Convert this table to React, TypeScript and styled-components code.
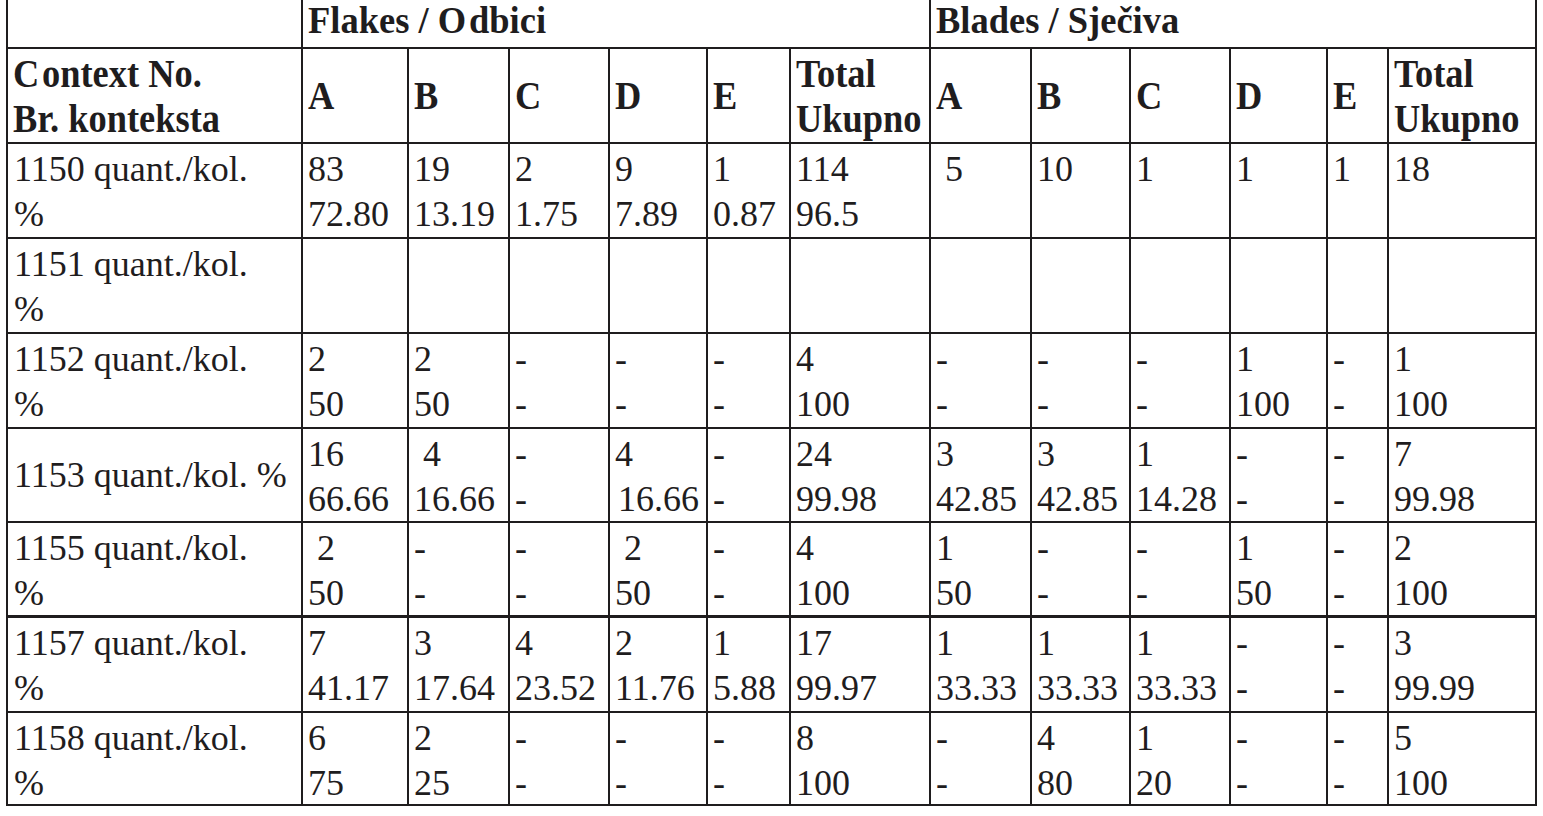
import React from "react";
import styled, { createGlobalStyle } from "styled-components";

const INK = "#1f1d1e";

const GlobalStyle = createGlobalStyle`
  html, body {
    margin: 0;
    padding: 0;
    background: #ffffff;
  }
  body {
    font-family: "Liberation Serif", "Times New Roman", serif;
    color: ${INK};
  }
`;

// track widths, each one holds its right-hand rule
const COLS = [295, 106, 101, 100, 98, 83, 140, 101, 99, 100, 97, 61, 148];
const ROWS = [49, 95, 95, 95, 95, 94, 95, 95, 93];

const Page = styled.div`
  padding-left: 6px;
`;

const Sheet = styled.div`
  display: grid;
  grid-template-columns: ${COLS.map((c) => `${c}px`).join(" ")};
  grid-template-rows: ${ROWS.map((r) => `${r}px`).join(" ")};
  width: max-content;
  border-left: 2px solid ${INK};
`;

const Box = styled.div<{ $span?: number; $heavy?: boolean }>`
  grid-column: span ${(p) => p.$span ?? 1};
  box-sizing: border-box;
  border-right: 2px solid ${INK};
  border-bottom: ${(p) => (p.$heavy ? 3 : 2)}px solid ${INK};
  font-size: 36px;
  line-height: 45px;
  white-space: pre;
`;

// the printed headings use a tall, narrow bold cut
const Narrow = styled.span<{ $size: number; $squeeze: number }>`
  display: inline-block;
  font-weight: 700;
  font-size: ${(p) => p.$size}px;
  white-space: pre;
  transform: scaleX(${(p) => p.$squeeze});
  transform-origin: left center;
`;

const Line = styled.span`
  display: block;
`;

const Loose = styled.span`
  margin-right: 3px;
`;

const GroupHead = styled(Box)`
  line-height: 40px;
  padding-left: 5px;
`;

const ColHead = styled(Box)`
  display: flex;
  flex-direction: column;
  justify-content: center;
  align-items: flex-start;
  padding-left: 5px;
`;

const Label = styled(Box)<{ $middle?: boolean }>`
  display: flex;
  flex-direction: column;
  justify-content: ${(p) => (p.$middle ? "center" : "flex-start")};
  padding: ${(p) => (p.$middle ? "0" : "3px")} 0 0 6px;
`;

const Value = styled(Box)`
  padding: 3px 0 0 5px;
`;

type Row = {
  id: string;
  middle?: boolean;
  heavy?: boolean;
  cells: string[][];
};

const dash = ["-", "-"];
const none: string[] = [];

const rows: Row[] = [
  {
    id: "1150",
    cells: [
      ["83", "72.80"], ["19", "13.19"], ["2", "1.75"], ["9", "7.89"], ["1", "0.87"], ["114", "96.5"],
      ["\u00a05"], ["10"], ["1"], ["1"], ["1"], ["18"],
    ],
  },
  {
    id: "1151",
    cells: Array.from({ length: 12 }, () => none),
  },
  {
    id: "1152",
    cells: [
      ["2", "50"], ["2", "50"], dash, dash, dash, ["4", "100"],
      dash, dash, dash, ["1", "100"], dash, ["1", "100"],
    ],
  },
  {
    id: "1153",
    middle: true,
    cells: [
      ["16", "66.66"], ["\u00a04", "16.66"], dash, ["4", "\u200a16.66"], dash, ["24", "99.98"],
      ["3", "42.85"], ["3", "42.85"], ["1", "14.28"], dash, dash, ["7", "99.98"],
    ],
  },
  {
    id: "1155",
    heavy: true,
    cells: [
      ["\u00a02", "50"], dash, dash, ["\u00a02", "50"], dash, ["4", "100"],
      ["1", "50"], dash, dash, ["1", "50"], dash, ["2", "100"],
    ],
  },
  {
    id: "1157",
    cells: [
      ["7", "41.17"], ["3", "17.64"], ["4", "23.52"], ["2", "11.76"], ["1", "5.88"], ["17", "99.97"],
      ["1", "33.33"], ["1", "33.33"], ["1", "33.33"], dash, dash, ["3", "99.99"],
    ],
  },
  {
    id: "1158",
    cells: [
      ["6", "75"], ["2", "25"], dash, dash, dash, ["8", "100"],
      dash, ["4", "80"], ["1", "20"], dash, dash, ["5", "100"],
    ],
  },
];

const subHeads = [["A"], ["B"], ["C"], ["D"], ["E"], ["Total", "Ukupno"]];

const App = () => {
  return (
    <Page>
      <GlobalStyle />
      <Sheet>
        <GroupHead />
        <GroupHead $span={6}>
          <Narrow $size={38} $squeeze={0.96}>
            Flakes / <Loose>O</Loose>dbici
          </Narrow>
        </GroupHead>
        <GroupHead $span={6}>
          <Narrow $size={38} $squeeze={0.96}>
            Blades / Sječiva
          </Narrow>
        </GroupHead>

        <ColHead>
          <Narrow $size={40} $squeeze={0.91}>
            <Line>
              <Loose>C</Loose>ontext No.
            </Line>
            <Line>Br. konteksta</Line>
          </Narrow>
        </ColHead>
        {[...subHeads, ...subHeads].map((h, i) => (
          <ColHead key={`h${i}`}>
            <Narrow $size={40} $squeeze={0.91}>
              {h.map((t) => (
                <Line key={t}>{t}</Line>
              ))}
            </Narrow>
          </ColHead>
        ))}

        {rows.map((row) => (
          <React.Fragment key={row.id}>
            <Label $middle={row.middle} $heavy={row.heavy}>
              {row.middle ? `${row.id} quant./kol. %` : `${row.id} quant./kol.\n%`}
            </Label>
            {row.cells.map((c, i) => (
              <Value key={`${row.id}-${i}`} $heavy={row.heavy}>
                {c.join("\n")}
              </Value>
            ))}
          </React.Fragment>
        ))}
      </Sheet>
    </Page>
  );
};

export default App;
